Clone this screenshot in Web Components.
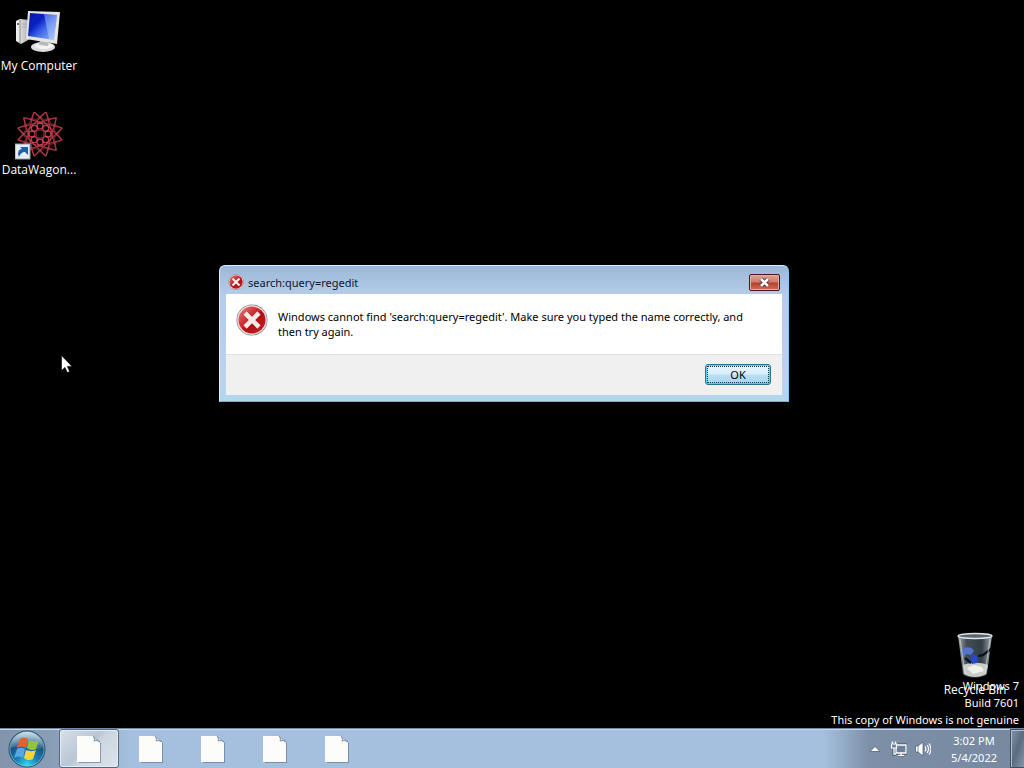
<!DOCTYPE html>
<html lang="en">
<head>
<meta charset="utf-8">
<title>Desktop</title>
<style>
html, body { margin: 0; height: 100%; background: #000; overflow: hidden; }
body { font: 11px/15px "Noto Sans", "Open Sans", sans-serif; color: #fff; cursor: default; }
</style>
</head>
<body>
<win-desktop>
  <desk-icon style="--x:0px;--y:8px" label="My Computer">
    <svg width="48" height="48" viewBox="0 0 48 48">
      <defs><linearGradient id="scr" x1="0" y1="0" x2="1" y2="1"><stop offset="0" stop-color="#0618a8"/><stop offset=".35" stop-color="#0a22c4"/><stop offset=".55" stop-color="#3a62e8"/><stop offset="1" stop-color="#9fc4f8"/></linearGradient>
      <linearGradient id="tw" x1="0" y1="0" x2="1" y2="0"><stop offset="0" stop-color="#f4f4f4"/><stop offset="1" stop-color="#a9a9a9"/></linearGradient></defs>
      <path d="M1 13 5 11 15 12V31L6 36 1 33Z" fill="url(#tw)"/><path d="M5 12V35" stroke="#8a8a8a"/><circle cx="3" cy="16" r="1" fill="#444"/><path d="M7 16 12 16M7 19 12 19" stroke="#aaa"/>
      <ellipse cx="28" cy="39" rx="12" ry="5" fill="#dedede"/><ellipse cx="29" cy="38" rx="9" ry="3" fill="#f5f5f5"/><path d="M25 32 34 34 33 38 24 37Z" fill="#b9b9b9"/>
      <path d="M13 3 45 4 42 36 11 31Z" fill="#e4e4e0"/><path d="M15 5 42 7 39 32 13 28Z" fill="url(#scr)"/><path d="M29 6 42 7 39 32 34 31Z" fill="#c9e0ff" opacity=".4"/>
    </svg>
  </desk-icon>
  <desk-icon style="--x:0px;--y:112px" label="DataWagon...">
    <svg width="48" height="48" viewBox="0 0 48 48">
      <g id="star" fill="none" stroke="#c8404c" transform="translate(25 22)"></g>
      <rect x="0" y="32" width="15" height="15" fill="#e8edf2" stroke="#8ba0b6"/><path d="M4 45C2 40 4 37 7 37L5 35H13V43L10 40C7 40 5 42 4 45Z" fill="#1f5fae"/>
    </svg>
  </desk-icon>
  <desk-icon style="--x:936px;--y:632px" label="Recycle Bin">
    <svg width="48" height="48" viewBox="0 0 48 48">
      <defs><linearGradient id="bin" x1="0" y1="0" x2="1" y2="0"><stop offset="0" stop-color="#a5aeb2"/><stop offset=".25" stop-color="#454d52"/><stop offset=".7" stop-color="#333d44"/><stop offset="1" stop-color="#a4b0b4"/></linearGradient></defs>
      <path d="M7 3H41L36 42C31 47 17 47 12 42Z" fill="url(#bin)"/>
      <path d="M12 33C20 30 29 30 37 33L35 42C29 46 19 46 13 42Z" fill="#c9cdca"/><path d="M16 36 23 33 31 35 33 39 22 42Z" fill="#f0f0ea"/>
      <path d="M11 20C11 15 20 13 23 19L20 23 16 22 12 25Z" fill="#5373cc"/><path d="M19 28 21 23 24 22 27 26 26 31 21 32Z" fill="#2748ca"/><path d="M40 17 32 23 27 24M14 26 20 31" fill="none" stroke="#0b1424" stroke-width="2.500"/>
      <ellipse cx="24" cy="4" rx="17" ry="2.500" fill="#59666c" stroke="#dce4e5" stroke-width="1.300"/><path d="M9 7 14 41M39 7 34 41" stroke="#dce5e6" opacity=".6"/>
    </svg>
  </desk-icon>
  <desk-watermark>
    <span>Windows 7</span><span>Build 7601</span><span>This copy of Windows is not genuine</span>
  </desk-watermark>
  <error-dialog caption="search:query=regedit">Windows cannot find 'search:query=regedit'. Make sure you typed the name correctly, and then try again.</error-dialog>
  <mouse-pointer></mouse-pointer>
</win-desktop>
<task-bar>
  <task-button active></task-button><task-button></task-button><task-button></task-button><task-button></task-button><task-button></task-button>
  <system-tray slot="tray" time="3:02 PM" date="5/4/2022"></system-tray>
</task-bar>

<script>
// Twelve-point rosette: long chords between the outer tips, loops around the centre.
const tip = (i, r) => { const a = (i + .5) * Math.PI / 6; return `${(r * Math.sin(a)).toFixed(1)} ${(-r * Math.cos(a)).toFixed(1)}`; };
let rosette = '';
for (let i = 0; i < 12; i++) {
  rosette += `<path d="M${tip(i, 23)}L${tip(i + 4, 23)}" opacity=".85" stroke-width="1.100"/>`;
  rosette += `<path d="M${tip(i, 23)}L${tip(i + 1, 15)}L${tip(i + 2, 23)}" opacity=".6"/>`;
}
for (let i = 0; i < 8; i++) {
  const a = i * Math.PI / 4;
  rosette += `<circle cx="${(8 * Math.sin(a)).toFixed(1)}" cy="${(-8 * Math.cos(a)).toFixed(1)}" r="3" stroke="#d8485a" stroke-width="1.300" opacity=".85"/>`;
}
rosette += '<circle r="4" fill="#000" stroke="#7a2230"/>';
document.getElementById('star').innerHTML = rosette;

const make = (name, render) => customElements.define(name, class extends HTMLElement {
  constructor() { super(); this.attachShadow({ mode: 'open' }); }
  connectedCallback() { this.shadowRoot.innerHTML = render(this); }
});

make('win-desktop', () => `<style>
:host { position: fixed; inset: 0; display: block; background: #000; }
</style><slot></slot>`);

make('desk-icon', el => `<style>
:host { position: absolute; left: var(--x); top: var(--y); width: 78px; display: flex; flex-direction: column; align-items: center; gap: 2px; text-align: center; white-space: nowrap; font-family: "Open Sans", "Noto Sans", sans-serif; font-size: 12px; }
::slotted(svg) { display: block; }
</style><slot></slot><span>${el.getAttribute('label')}</span>`);

make('desk-watermark', () => `<style>
:host { position: absolute; right: 5px; bottom: 40px; display: flex; flex-direction: column; align-items: flex-end; line-height: 17px; }
</style><slot></slot>`);

const errorIcon = size => `<svg width="${size}" height="${size}" viewBox="0 0 32 32" aria-hidden="true">
<defs><linearGradient id="r" x1="0" y1="0" x2="1" y2="1"><stop offset="0" stop-color="#e98083"/><stop offset=".45" stop-color="#cc2228"/><stop offset=".55" stop-color="#b40c14"/><stop offset="1" stop-color="#c5242a"/></linearGradient></defs>
<circle cx="16" cy="16" r="15.500" fill="#8f8585"/><circle cx="16" cy="16" r="14.700" fill="#eee6e6"/><circle cx="16" cy="16" r="13.500" fill="url(#r)"/>
<path d="M9 9 23 23M23 9 9 23" stroke="#7d1014" stroke-width="6" opacity=".4"/><path d="M9 9 23 23M23 9 9 23" stroke="#f7e9e6" stroke-width="4.600"/></svg>`;

make('error-dialog', el => `<style>
:host { position: absolute; left: 219px; top: 265px; width: 570px; box-sizing: border-box; display: block; color: #000;
  padding: 0 6px 6px; border: 1px solid #d9eefa; border-right-color: #6fd2ea; border-bottom-color: #50c4da; border-radius: 6px 6px 0 0;
  background: linear-gradient(#9db8d8, #b5cde9 30px, #bdd3ec 115px, #b0d7ec); }
header { display: flex; align-items: center; gap: 4px; height: 28px; padding: 4px 2px 0; box-sizing: border-box; }
h1 { flex: 1; margin: 0; font: inherit; color: #0a1730; }
svg { display: block; flex: none; }
.close { width: 31px; height: 17px; padding: 0; display: grid; place-items: center; border: 1px solid #4e1420; border-radius: 2px;
  background: linear-gradient(#e0a195, #d27a6b 48%, #b73c2c 52%, #cf705c); box-shadow: inset 0 0 0 1px #e9aaa0; }
main { background: #fff; display: flex; gap: 10px; padding: 10px 20px 18px 10px; height: 61px; box-sizing: border-box; border-bottom: 1px solid #dfdfdf; }
p { margin: 0; padding: 5px 0 0; flex: 1; }
footer { background: #f0f0f0; height: 40px; box-sizing: border-box; padding: 9px 11px 10px; display: flex; justify-content: flex-end; }
.ok { width: 66px; height: 21px; padding: 0; font: inherit; color: #000; border: 1px solid #2c7494; border-radius: 3px; position: relative;
  background: linear-gradient(#e8f5fc, #d8eefa 48%, #bbe0f4 52%, #a6d4ec); box-shadow: inset 0 0 0 1px #58d0ee; display: grid; place-items: center; line-height: 15px; }
.ok::after { content: ""; position: absolute; inset: 1px; border: 1px dotted #15333f; }
</style>
<header>${errorIcon(16)}<h1>${el.getAttribute('caption')}</h1>
<button class="close" aria-label="Close"><svg width="13" height="11" viewBox="0 0 13 11"><path d="M3 2 10 9M10 2 3 9" stroke="#5c3434" stroke-width="4.400"/><path d="M3 2 10 9M10 2 3 9" stroke="#fff" stroke-width="2.600"/></svg></button></header>
<main>${errorIcon(32)}<p><slot></slot></p></main>
<footer><button class="ok">OK</button></footer>`);

make('mouse-pointer', () => `<style>
:host { position: absolute; left: 61px; top: 355px; }
svg { display: block; }
</style><svg width="12" height="19" viewBox="0 0 12 19"><path d="M.5.5V15.500L4 12.400 6.300 17.600 8.600 16.600 6.400 11.400H11Z" fill="#fff" stroke="#000" stroke-width=".6"/></svg>`);

make('task-bar', () => `<style>
:host { position: fixed; left: 0; right: 0; bottom: 0; height: 40px; box-sizing: border-box; display: flex; align-items: stretch; gap: 2px;
  border-top: 1px solid #7189a4; box-shadow: inset 0 1px #c6d7ea;
  background: linear-gradient(90deg, #8294ab, #8b9fb9 58px, #a4c0de 130px, #a4c0de calc(100% - 200px), #7d90a8 calc(100% - 155px), #77889f); }
.start { width: 57px; padding: 0 0 0 8px; border: 0; background: none; display: flex; align-items: center; }
svg { display: block; }
nav { display: flex; gap: 2px; flex: 1; }
</style>
<button class="start" aria-label="Start"><svg width="38" height="38" viewBox="0 0 38 38">
<defs><radialGradient id="orb" cx=".5" cy=".95" r=".9"><stop offset="0" stop-color="#35d8f2"/><stop offset=".35" stop-color="#1582b8"/><stop offset=".7" stop-color="#17507f"/><stop offset="1" stop-color="#7ca4bd"/></radialGradient>
<linearGradient id="gl" x1="0" y1="0" x2="0" y2="1"><stop offset="0" stop-color="#e0edf2" stop-opacity=".8"/><stop offset="1" stop-color="#9fc4d6" stop-opacity=".15"/></linearGradient></defs>
<circle cx="19" cy="19" r="18" fill="url(#orb)" stroke="#244c68"/><circle cx="19" cy="19" r="17" fill="none" stroke="#a2cfdf" opacity=".6"/>
<path d="M3 18A16 16 0 0 1 35 18C25 22 13 14 3 18Z" fill="url(#gl)"/>
<path d="M12 9C15 7 18 8 20 9L18 18C15 16 12 16 9 18Z" fill="#e8602a"/><path d="M21 10C24 11 28 12 31 10L28 19C25 21 22 20 19 18Z" fill="#90c43c"/>
<path d="M9 19C12 17 15 18 17 19L15 28C12 26 9 26 6 28Z" fill="#55a8e4"/><path d="M18 20C21 21 24 22 28 20L25 29C22 31 18 30 16 28Z" fill="#fbd33c"/></svg></button>
<nav><slot></slot></nav><slot name="tray"></slot>`);

make('task-button', () => `<style>
:host { display: block; width: 60px; }
:host([active]) button { border: 1px solid #55687f; box-shadow: inset 0 0 0 1px #e4ebf3; background: linear-gradient(135deg, #d9e0e8, #b9c6d5 45%, #ccd6e1 55%, #dce4ec); }
button { width: 100%; height: 100%; padding: 0; border: 1px solid transparent; border-radius: 3px; background: none; display: grid; place-items: center; }
svg { display: block; }
</style><button aria-label="Document"><svg width="26" height="30" viewBox="0 0 26 30">
<path d="M3 3H18L25 9V29H3Z" fill="#5e7690" opacity=".65"/><path d="M1 2H18L24 8V28H1Z" fill="#fcfcfb"/><path d="M17 2 24 8C22 7 21 6 18 7 19 5 18 3 17 2Z" fill="#dce2e8" stroke="#70879d" stroke-width=".9"/></svg></button>`);

make('system-tray', el => `<style>
:host { display: flex; align-items: center; color: #fff; }
button { padding: 0; border: 0; background: none; display: block; }
svg { display: block; }
.icons { display: flex; align-items: center; gap: 8px; margin-right: 7px; }
time { width: 72px; text-align: center; line-height: 17px; }
time span { display: block; }
.peek { width: 14px; height: 100%; box-sizing: border-box; border: 1px solid #3f5063; border-right: 0; box-shadow: inset 1px 1px #aebccc; background: linear-gradient(110deg, #8494a8, #5a6a80 50%, #8797aa); }
</style><div class="icons">
<button aria-label="Show hidden icons"><svg width="16" height="16" viewBox="0 0 16 16"><path d="M3 10.500 8 5.500 13 10.500Z" fill="#fff" stroke="#50617a" stroke-width=".8"/></svg></button>
<button aria-label="Network"><svg width="16" height="16" viewBox="0 0 16 16"><g fill="none" stroke="#3d4d62" stroke-width="3"><path d="M6 4H15V12H5V7M7 14.500H13M3 7V13H5"/></g><path d="M6 4H15V12H5V7" fill="#6d7f97" stroke="#fff" stroke-width="1.300"/><path d="M7 14.500H13M10 12V14.500M3 7V13H5" fill="none" stroke="#fff" stroke-width="1.300"/><path d="M.5 3H5.500V7H.5ZM1.500.5V3M4.500.5V3" fill="#6d7f97" stroke="#fff" stroke-width="1.200"/></svg></button>
<button aria-label="Volume"><svg width="16" height="16" viewBox="0 0 16 16"><path d="M.5 5H3L8 1V15L3 11H.5Z" fill="#fff" stroke="#45556a" stroke-width=".7"/><path d="M3 5V11" stroke="#7b8ba0"/><path d="M10 5.500C11 7 11 9 10 10.500M12 4C14 6.500 14 9.500 12 12M14 2.500C16.500 6 16.500 10 14 13.500" fill="none" stroke="#fff" stroke-width="1.200"/></svg></button>
</div><time datetime="2022-05-04T15:02"><span>${el.getAttribute('time')}</span><span>${el.getAttribute('date')}</span></time><button class="peek" aria-label="Show desktop"></button>`);
</script>
</body>
</html>
